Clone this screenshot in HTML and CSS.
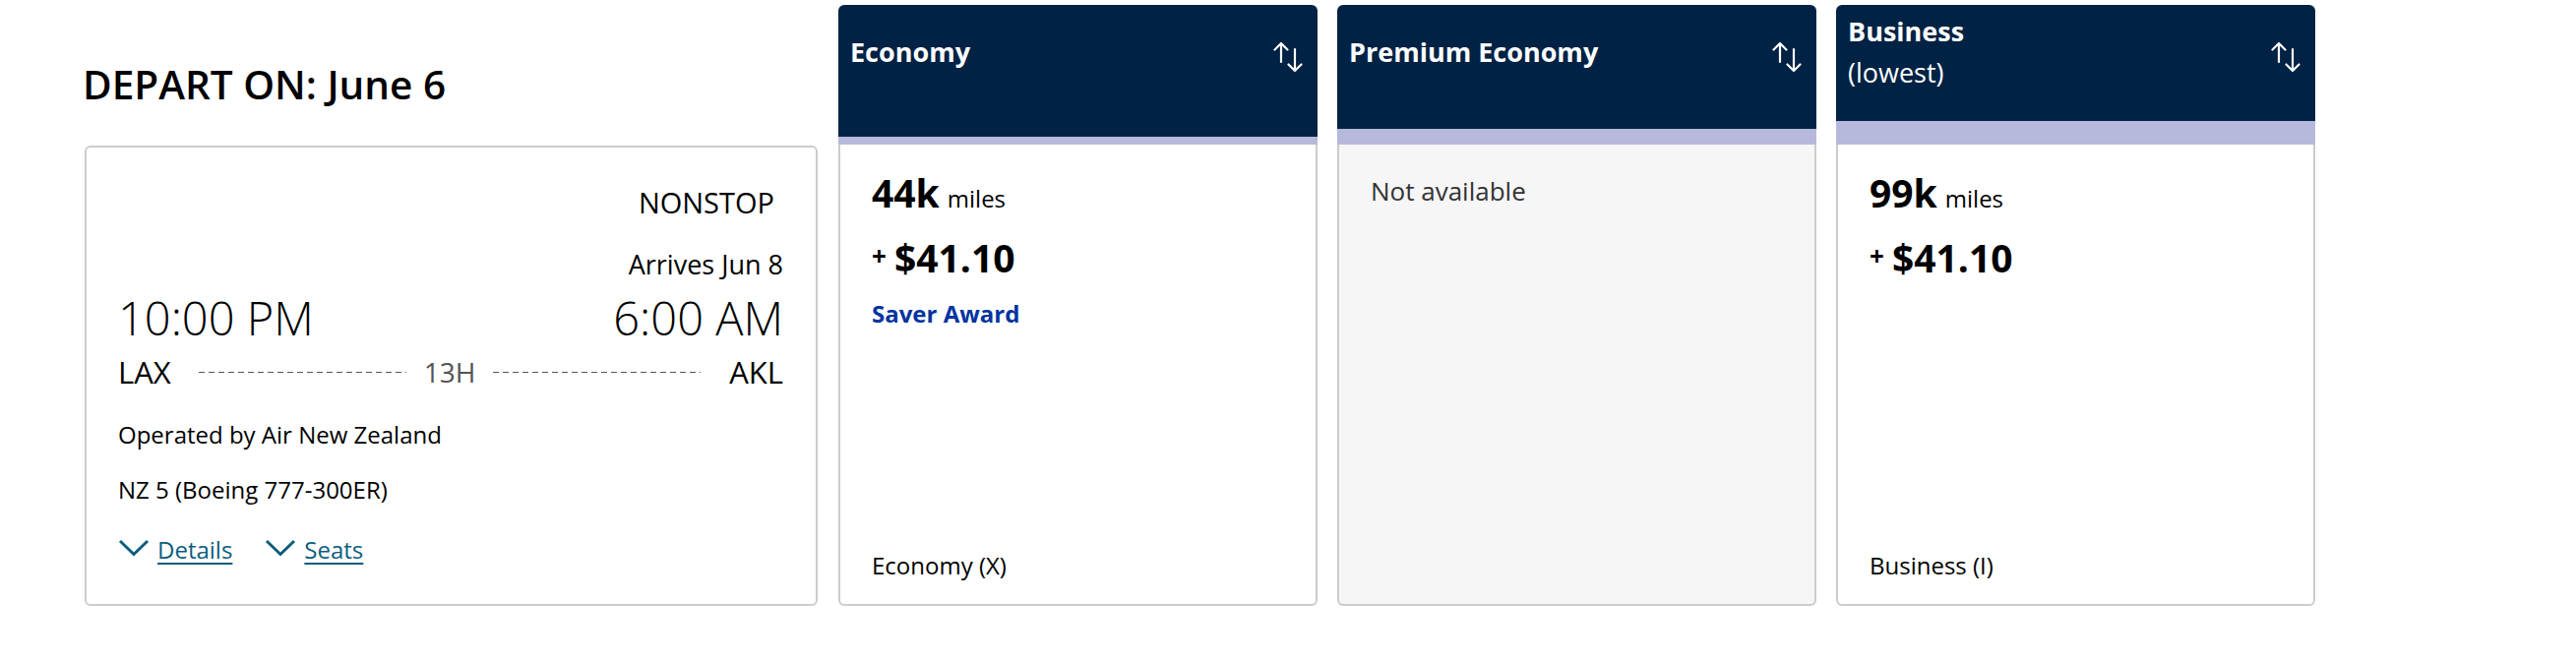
FILE: index.html
```html
<!DOCTYPE html>
<html lang="en">
<head>
<meta charset="utf-8">
<title>Depart on June 6</title>
<link rel="stylesheet" href="styles.css">
</head>
<body>
<div class="page">
  <section class="left">
    <h2 class="depart">DEPART ON: June 6</h2>
    <div class="flight-card">
      <div class="stops">NONSTOP</div>
      <div class="arrive">Arrives Jun 8</div>
      <div class="times"><span>10:00 PM</span><span>6:00 AM</span></div>
      <div class="route">
        <span class="code">LAX</span>
        <span class="dash dash-l"></span>
        <span class="dur">13H</span>
        <span class="dash dash-r"></span>
        <span class="code">AKL</span>
      </div>
      <div class="info op">Operated by Air New Zealand</div>
      <div class="info num">NZ 5 (Boeing 777-300ER)</div>
      <div class="links">
        <a class="lnk" href="#"><svg class="chev" viewBox="0 0 32 18" width="32" height="18"><path d="M2 2 L16 15.5 L30 2" fill="none" stroke="#0b5d7e" stroke-width="3"/></svg><span>Details</span></a>
        <a class="lnk" href="#"><svg class="chev" viewBox="0 0 32 18" width="32" height="18"><path d="M2 2 L16 15.5 L30 2" fill="none" stroke="#0b5d7e" stroke-width="3"/></svg><span>Seats</span></a>
      </div>
    </div>
  </section>

  <section class="fares">
    <div class="fare">
      <div class="fare-head head-1">
        <div class="head-row">
          <div class="title"><b>Economy</b></div>
          <svg class="sort" viewBox="0 0 32 32" width="32" height="32"><path d="M8 21 V2 M1.5 8.5 L8 2 L14.5 8.5 M22 8 V30 M15.5 23.5 L22 30 L28.5 23.5" fill="none" stroke="#fff" stroke-width="2.2" stroke-linecap="round" stroke-linejoin="round"/></svg>
        </div>
      </div>
      <div class="stripe"></div>
      <div class="fare-body">
        <div class="miles"><b>44k</b><span>miles</span></div>
        <div class="price"><span class="plus">+</span><b>$41.10</b></div>
        <div class="saver">Saver Award</div>
        <div class="cabin">Economy (X)</div>
      </div>
    </div>

    <div class="fare">
      <div class="fare-head head-2">
        <div class="head-row">
          <div class="title"><b>Premium Economy</b></div>
          <svg class="sort" viewBox="0 0 32 32" width="32" height="32"><path d="M8 21 V2 M1.5 8.5 L8 2 L14.5 8.5 M22 8 V30 M15.5 23.5 L22 30 L28.5 23.5" fill="none" stroke="#fff" stroke-width="2.2" stroke-linecap="round" stroke-linejoin="round"/></svg>
        </div>
      </div>
      <div class="stripe"></div>
      <div class="fare-body na">
        <div class="not-avail">Not available</div>
      </div>
    </div>

    <div class="fare">
      <div class="fare-head head-3">
        <div class="head-row">
          <div class="title"><b>Business</b><br>(lowest)</div>
          <svg class="sort" viewBox="0 0 32 32" width="32" height="32"><path d="M8 21 V2 M1.5 8.5 L8 2 L14.5 8.5 M22 8 V30 M15.5 23.5 L22 30 L28.5 23.5" fill="none" stroke="#fff" stroke-width="2.2" stroke-linecap="round" stroke-linejoin="round"/></svg>
        </div>
      </div>
      <div class="stripe"></div>
      <div class="fare-body">
        <div class="miles"><b>99k</b><span>miles</span></div>
        <div class="price"><span class="plus">+</span><b>$41.10</b></div>
        <div class="cabin">Business (I)</div>
      </div>
    </div>
  </section>
</div>
</body>
</html>
```

FILE: styles.css
```css
* { box-sizing: border-box; }
html, body { margin: 0; padding: 0; background: #fff; }
body { font-family: "Open Sans", "Noto Sans", sans-serif; color: #000; }

.page {
  display: flex;
  gap: 21px;
  padding: 5px 0 0 86px;
  height: 672px;
}

.left {
  width: 745px;
  height: 611px;
  display: flex;
  flex-direction: column;
  justify-content: flex-end;
}

.depart {
  margin: 0 0 35px -2px;
  font-size: 40.5px;
  font-weight: 600;
  line-height: 54px;
}

.flight-card {
  height: 468px;
  border: 2px solid #cccccc;
  border-radius: 6px;
  padding: 36px 33px 0 32px;
  display: flex;
  flex-direction: column;
}

.stops {
  text-align: right;
  font-size: 29px;
  line-height: 40px;
  margin-right: 9px;
}
.arrive {
  text-align: right;
  font-size: 27px;
  line-height: 32px;
  margin-top: 27px;
}
.times {
  display: flex;
  justify-content: space-between;
  font-size: 47px;
  font-weight: 300;
  line-height: 56px;
  margin-top: 10px;
}
.route {
  display: flex;
  align-items: center;
  font-size: 31px;
  line-height: 36px;
  margin-top: 9px;
}
.dash {
  flex: 1;
  height: 1px;
  background: repeating-linear-gradient(to right, #555 0 6px, transparent 6px 10px);
}
.dash-l { margin: 0 18px 0 28px; }
.dash-r { margin: 0 29px 0 18px; }
.dur { color: #555; font-size: 28px; }

.info { font-size: 24px; line-height: 32px; }
.op { margin-top: 30px; }
.num { margin-top: 24px; }

.links {
  display: flex;
  gap: 33px;
  margin-top: 29px;
  font-size: 24px;
  line-height: 32px;
}
.lnk {
  display: flex;
  align-items: center;
  gap: 8px;
  color: #0b5d7e;
  text-decoration: none;
}
.lnk span {
  text-decoration: underline;
  text-decoration-thickness: 2px;
  text-underline-offset: 4px;
}
.chev { display: block; margin-top: -4px; }

.fares { display: flex; gap: 20px; }
.fare {
  width: 487px;
  height: 611px;
  display: flex;
  flex-direction: column;
}
.fare-head {
  background: #002244;
  border-radius: 6px 6px 0 0;
  color: #fff;
  padding: 0 13px 0 12px;
}
.head-1 { height: 134px; }
.head-2 { height: 126px; }
.head-3 { height: 118px; }
.head-row {
  height: 96px;
  display: flex;
  align-items: center;
  justify-content: space-between;
}
.title {
  font-size: 27px;
  line-height: 42px;
}
.title b { font-weight: 700; }
.sort { display: block; margin-top: 10px; }

.stripe { flex: 1; background: #b6b9db; }

.fare-body {
  height: 469px;
  border: 2px solid #cccccc;
  border-top: none;
  border-radius: 0 0 6px 6px;
  padding: 25px 32px 23px 32px;
  display: flex;
  flex-direction: column;
}
.fare-body.na { background: #f6f6f6; }

.miles, .price {
  display: flex;
  align-items: baseline;
  height: 48px;
}
.miles { gap: 8px; }
.price { gap: 8px; margin-top: 18px; }
.miles b, .price b {
  font-size: 39px;
  font-weight: 700;
  line-height: 48px;
}
.miles span { font-size: 24px; line-height: 32px; }
.plus {
  align-self: flex-start;
  margin-top: 6px;
  font-size: 26px;
  font-weight: 700;
  line-height: 32px;
}
.saver {
  margin-top: 17px;
  font-size: 24px;
  font-weight: 700;
  line-height: 32px;
  color: #0033a0;
}
.cabin {
  margin-top: auto;
  font-size: 24px;
  line-height: 32px;
}
.not-avail {
  margin-top: 4px;
  font-size: 26px;
  line-height: 36px;
  color: #333;
}
```
